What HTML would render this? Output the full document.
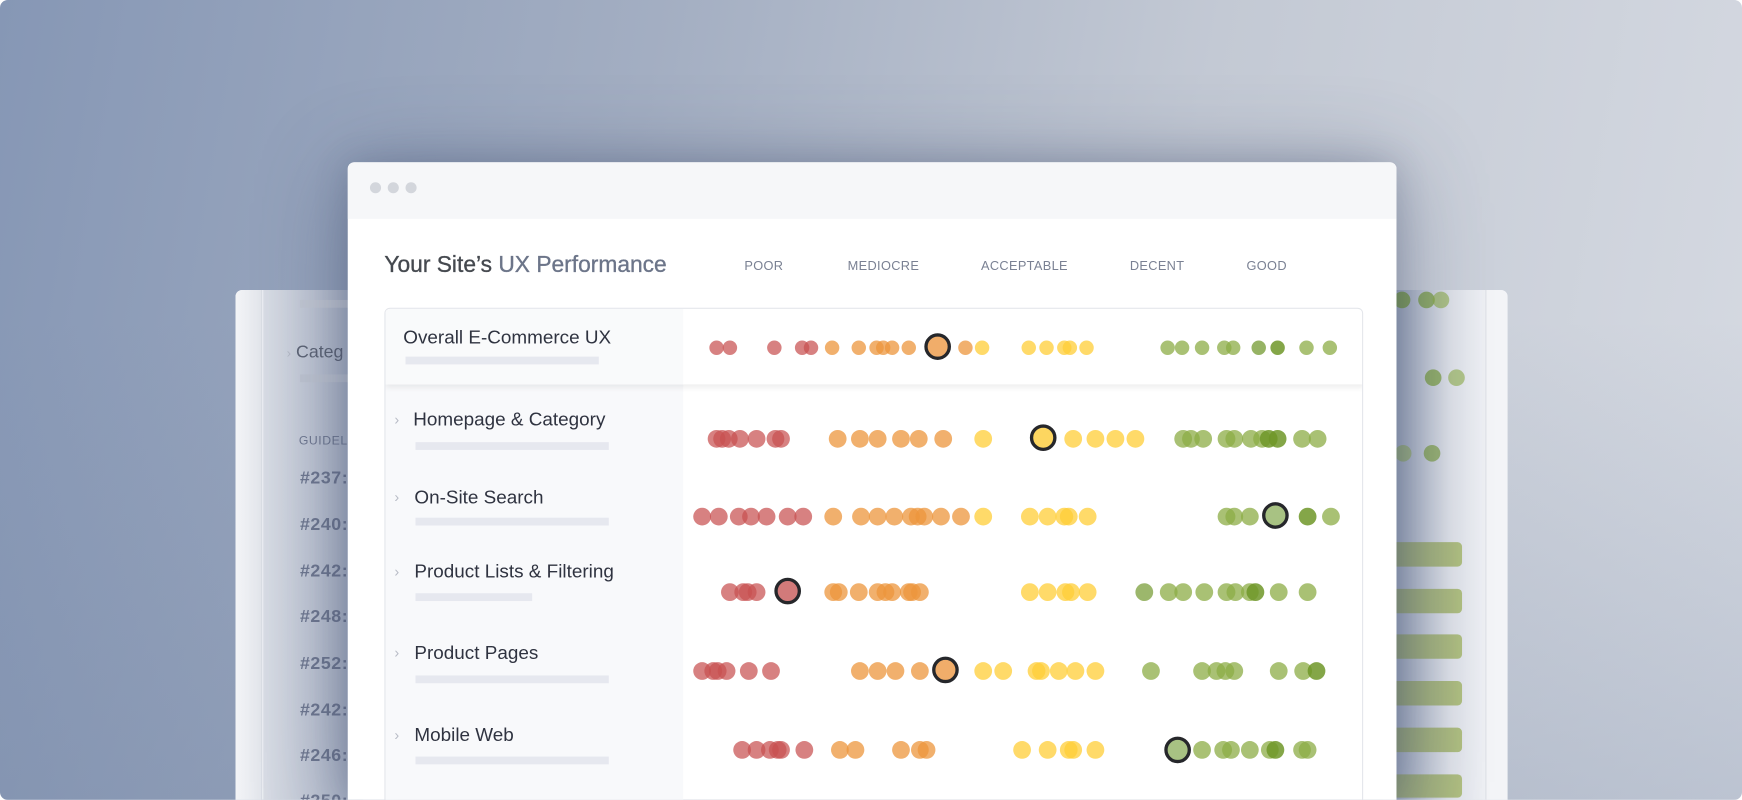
<!DOCTYPE html>
<html><head><meta charset="utf-8"><style>
*{margin:0;padding:0;box-sizing:border-box}
html,body{width:1742px;height:800px;overflow:hidden;background:#fff}
#s{position:absolute;left:0;top:0;width:1568px;height:720px;transform:scale(1.11097);transform-origin:0 0;overflow:hidden;border-radius:7px;
background:linear-gradient(180deg,rgba(120,138,170,0) 40%,rgba(110,128,160,0.25) 100%),linear-gradient(100deg,#8697b5 0%,#a3aec2 35%,#c3c9d4 65%,#d6dae2 100%);
font-family:"Liberation Sans",sans-serif}
.a{position:absolute}
#back{left:212px;top:261px;width:1145px;height:459px;border-radius:6px 6px 0 0;background:#eef0f4;overflow:hidden}
#back .strip{left:0;top:0;width:24px;height:100%;background:linear-gradient(90deg,#f3f4f7,#e3e6ec);border-right:1px solid #d8dce4}
#back .lc{left:25px;top:0;width:90px;height:100%;background:linear-gradient(90deg,#d9dde5,#a9b2c5)}
#back .rs{left:1045px;top:0;width:80px;height:100%;background:linear-gradient(90deg,#a3adc1,#dfe2e9 60%,#eef0f4)}
#back .rl{left:1125px;top:0;width:20px;height:100%;background:#f3f4f7;border-left:1px solid #dde0e6}
.gb{position:absolute;left:1250px;width:66px;height:22px;border-radius:4px;background:linear-gradient(90deg,#92a07c,#b0bf80)}
.bt{position:absolute;color:#6f7890;font-size:16px;font-weight:bold;letter-spacing:0.5px}
#win{left:313px;top:146px;width:944px;height:574px;background:#fff;border-radius:6px 6px 0 0;box-shadow:0 10px 80px rgba(50,65,100,0.45),0 0 30px rgba(50,65,100,0.2);overflow:hidden}
#hdr{left:0;top:0;width:944px;height:51px;background:#f6f7f9}
.wd{position:absolute;top:18px;width:10px;height:10px;border-radius:50%;background:#d3d6dc}
#title{left:33px;top:81px;font-size:20.5px;color:#45494f;white-space:nowrap;-webkit-text-stroke:0.3px #45494f}
#title span{color:#6c7589;-webkit-text-stroke:0.3px #6c7589}
.lbl{position:absolute;top:88px;font-size:11.5px;color:#7a8193;letter-spacing:0.3px}
#tbl{left:33px;top:131px;width:881px;height:460px;border:1px solid #e4e6eb;border-radius:5px;overflow:hidden}
#lcol{left:0;top:0;width:268px;height:100%;background:#f8f9fb}
#ov{left:0;top:0;width:881px;height:68px;background:#fff;box-shadow:0 3px 5px rgba(0,0,0,0.07)}
#ov .l{left:0;top:0;width:268px;height:68px;background:#f9fafb}
.rt{position:absolute;font-size:17px;color:#2f3340;white-space:nowrap}
.bar{position:absolute;height:7px;background:#e6e8ef}
.ch{position:absolute;font-size:13px;color:#b8bcc6}
.d{position:absolute;width:16px;height:16px;border-radius:50%;transform:translate(-50%,-50%)}
.sm .d{width:13px;height:13px}
.r{background:rgba(200,80,80,0.72)}
.o{background:rgba(236,150,60,0.75)}
.y{background:rgba(255,205,55,0.75)}
.g{background:rgba(140,172,70,0.75)}
.G{background:rgba(110,150,40,0.85)}
.h{width:24px!important;height:24px!important;border:3px solid #26272b}
.h.r{background:#d27a7a}.h.o{background:#f0ad6a}.h.y{background:#fdd660}.h.g{background:#a8c283}
</style></head><body><div id="s">

<div id="back" class="a">
 <div class="a strip"></div>
 <div class="a lc"></div>
 <div class="a rs"></div>
 <div class="a rl"></div>
 <div class="a" style="left:58px;top:9px;width:60px;height:7px;background:#c4c9d4"></div>
 <div class="a" style="left:46px;top:48px;font-size:16px;color:#5d6474;white-space:nowrap"><span style="color:#b5bac6;font-size:12px">›</span> Categ</div>
 <div class="a" style="left:58px;top:76px;width:60px;height:7px;background:#c0c6d2"></div>
 <div class="a" style="left:57px;top:130px;font-size:11px;color:#6f7890;letter-spacing:0.5px">GUIDELI</div>
 <div class="bt" style="left:58px;top:161px">#237:</div>
 <div class="bt" style="left:58px;top:203px">#240:</div>
 <div class="bt" style="left:58px;top:245px">#242:</div>
 <div class="bt" style="left:58px;top:286px">#248:</div>
 <div class="bt" style="left:58px;top:328px">#252:</div>
 <div class="bt" style="left:58px;top:370px">#242:</div>
 <div class="bt" style="left:58px;top:411px">#246:</div>
 <div class="bt" style="left:58px;top:452px">#250:</div>
</div>
<div class="d G" style="left:1262px;top:270px;width:15px;height:15px;opacity:.8"></div>
<div class="d G" style="left:1284px;top:270px;width:15px;height:15px;opacity:.75"></div>
<div class="d g" style="left:1297px;top:270px;width:15px;height:15px;opacity:.8"></div>
<div class="d G" style="left:1290px;top:340px;width:15px;height:15px;opacity:.75"></div>
<div class="d g" style="left:1311px;top:340px;width:15px;height:15px;opacity:.8"></div>
<div class="d g" style="left:1263px;top:408px;width:15px;height:15px;opacity:.7"></div>
<div class="d G" style="left:1289px;top:408px;width:15px;height:15px;opacity:.7"></div>
<div class="gb" style="top:488px"></div>
<div class="gb" style="top:530px"></div>
<div class="gb" style="top:571px"></div>
<div class="gb" style="top:613px"></div>
<div class="gb" style="top:655px"></div>
<div class="gb" style="top:697px;height:21px"></div>

<div id="win" class="a">
 <div id="hdr" class="a"></div>
 <div class="wd" style="left:20px"></div><div class="wd" style="left:36px"></div><div class="wd" style="left:52px"></div>
 <div id="title" class="a">Your Site’s <span>UX Performance</span></div>
 <div class="lbl" style="left:357px">POOR</div>
 <div class="lbl" style="left:450px">MEDIOCRE</div>
 <div class="lbl" style="left:570px">ACCEPTABLE</div>
 <div class="lbl" style="left:704px">DECENT</div>
 <div class="lbl" style="left:809px">GOOD</div>
 <div id="tbl" class="a">
  <div id="lcol" class="a"></div>
  <div id="ov" class="a"><div class="a l"></div></div>
  <div class="rt" style="left:16px;top:16px">Overall E-Commerce UX</div>
  <div class="bar" style="left:18px;top:43px;width:174px"></div>
  <div class="ch" style="left:8px;top:92px">›</div>
  <div class="rt" style="left:25px;top:90px">Homepage &amp; Category</div>
  <div class="bar" style="left:27px;top:120px;width:174px"></div>
  <div class="ch" style="left:8px;top:162px">›</div>
  <div class="rt" style="left:26px;top:160px">On-Site Search</div>
  <div class="bar" style="left:27px;top:188px;width:174px"></div>
  <div class="ch" style="left:8px;top:229px">›</div>
  <div class="rt" style="left:26px;top:227px">Product Lists &amp; Filtering</div>
  <div class="bar" style="left:27px;top:256px;width:105px"></div>
  <div class="ch" style="left:8px;top:302px">›</div>
  <div class="rt" style="left:26px;top:300px">Product Pages</div>
  <div class="bar" style="left:27px;top:330px;width:174px"></div>
  <div class="ch" style="left:8px;top:376px">›</div>
  <div class="rt" style="left:26px;top:374px">Mobile Web</div>
  <div class="bar" style="left:27px;top:403px;width:174px"></div>
 </div>
</div>

<div class="sm">
<div class="d r" style="left:645px;top:313px"></div><div class="d r" style="left:657px;top:313px"></div><div class="d r" style="left:697px;top:313px"></div><div class="d r" style="left:722px;top:313px"></div><div class="d r" style="left:730px;top:313px"></div>
<div class="d o" style="left:749px;top:313px"></div><div class="d o" style="left:773px;top:313px"></div><div class="d o" style="left:789px;top:313px"></div><div class="d o" style="left:795px;top:313px"></div><div class="d o" style="left:803px;top:313px"></div><div class="d o" style="left:818px;top:313px"></div>
<div class="d o h" style="left:844px;top:312px"></div><div class="d o" style="left:869px;top:313px"></div>
<div class="d y" style="left:884px;top:313px"></div><div class="d y" style="left:926px;top:313px"></div><div class="d y" style="left:942px;top:313px"></div><div class="d y" style="left:958px;top:313px"></div><div class="d y" style="left:963px;top:313px"></div><div class="d y" style="left:978px;top:313px"></div>
<div class="d g" style="left:1051px;top:313px"></div><div class="d g" style="left:1064px;top:313px"></div><div class="d g" style="left:1082px;top:313px"></div><div class="d g" style="left:1102px;top:313px"></div><div class="d g" style="left:1110px;top:313px"></div><div class="d G" style="left:1133px;top:313px;opacity:.85"></div><div class="d G" style="left:1150px;top:313px"></div><div class="d g" style="left:1176px;top:313px"></div><div class="d g" style="left:1197px;top:313px"></div>
</div>

<div class="d r" style="left:645px;top:395px"></div><div class="d r" style="left:650px;top:395px"></div><div class="d r" style="left:656px;top:395px"></div><div class="d r" style="left:666px;top:395px"></div><div class="d r" style="left:681px;top:395px"></div><div class="d r" style="left:698px;top:395px"></div><div class="d r" style="left:703px;top:395px"></div>
<div class="d o" style="left:754px;top:395px"></div><div class="d o" style="left:774px;top:395px"></div><div class="d o" style="left:790px;top:395px"></div><div class="d o" style="left:811px;top:395px"></div><div class="d o" style="left:827px;top:395px"></div><div class="d o" style="left:849px;top:395px"></div>
<div class="d y" style="left:885px;top:395px"></div><div class="d y h" style="left:939px;top:394px"></div><div class="d y" style="left:966px;top:395px"></div><div class="d y" style="left:986px;top:395px"></div><div class="d y" style="left:1004px;top:395px"></div><div class="d y" style="left:1022px;top:395px"></div>
<div class="d g" style="left:1065px;top:395px"></div><div class="d g" style="left:1072px;top:395px"></div><div class="d g" style="left:1083px;top:395px"></div><div class="d g" style="left:1104px;top:395px"></div><div class="d g" style="left:1111px;top:395px"></div><div class="d g" style="left:1126px;top:395px"></div><div class="d g" style="left:1136px;top:395px"></div><div class="d G" style="left:1142px;top:395px"></div><div class="d G" style="left:1150px;top:395px"></div><div class="d g" style="left:1172px;top:395px"></div><div class="d g" style="left:1186px;top:395px"></div>

<div class="d r" style="left:632px;top:465px"></div><div class="d r" style="left:647px;top:465px"></div><div class="d r" style="left:665px;top:465px"></div><div class="d r" style="left:676px;top:465px"></div><div class="d r" style="left:690px;top:465px"></div><div class="d r" style="left:709px;top:465px"></div><div class="d r" style="left:723px;top:465px"></div>
<div class="d o" style="left:750px;top:465px"></div><div class="d o" style="left:775px;top:465px"></div><div class="d o" style="left:790px;top:465px"></div><div class="d o" style="left:805px;top:465px"></div><div class="d o" style="left:820px;top:465px"></div><div class="d o" style="left:826px;top:465px"></div><div class="d o" style="left:832px;top:465px"></div><div class="d o" style="left:847px;top:465px"></div><div class="d o" style="left:865px;top:465px"></div>
<div class="d y" style="left:885px;top:465px"></div><div class="d y" style="left:927px;top:465px"></div><div class="d y" style="left:943px;top:465px"></div><div class="d y" style="left:958px;top:465px"></div><div class="d y" style="left:962px;top:465px"></div><div class="d y" style="left:979px;top:465px"></div>
<div class="d g" style="left:1104px;top:465px"></div><div class="d g" style="left:1111px;top:465px"></div><div class="d g" style="left:1125px;top:465px"></div><div class="d g h" style="left:1148px;top:464px"></div><div class="d G" style="left:1177px;top:465px"></div><div class="d g" style="left:1198px;top:465px"></div>

<div class="d r" style="left:657px;top:533px"></div><div class="d r" style="left:669px;top:533px"></div><div class="d r" style="left:673px;top:533px"></div><div class="d r" style="left:681px;top:533px"></div><div class="d r h" style="left:709px;top:532px"></div>
<div class="d o" style="left:750px;top:533px"></div><div class="d o" style="left:755px;top:533px"></div><div class="d o" style="left:773px;top:533px"></div><div class="d o" style="left:790px;top:533px"></div><div class="d o" style="left:797px;top:533px"></div><div class="d o" style="left:803px;top:533px"></div><div class="d o" style="left:818px;top:533px"></div><div class="d o" style="left:821px;top:533px"></div><div class="d o" style="left:828px;top:533px"></div>
<div class="d y" style="left:927px;top:533px"></div><div class="d y" style="left:943px;top:533px"></div><div class="d y" style="left:959px;top:533px"></div><div class="d y" style="left:964px;top:533px"></div><div class="d y" style="left:979px;top:533px"></div>
<div class="d G" style="left:1030px;top:533px;opacity:.8"></div><div class="d g" style="left:1052px;top:533px"></div><div class="d g" style="left:1065px;top:533px"></div><div class="d g" style="left:1084px;top:533px"></div><div class="d g" style="left:1104px;top:533px"></div><div class="d g" style="left:1112px;top:533px"></div><div class="d g" style="left:1125px;top:533px"></div><div class="d G" style="left:1130px;top:533px"></div><div class="d g" style="left:1151px;top:533px"></div><div class="d g" style="left:1177px;top:533px"></div>

<div class="d r" style="left:632px;top:604px"></div><div class="d r" style="left:642px;top:604px"></div><div class="d r" style="left:646px;top:604px"></div><div class="d r" style="left:654px;top:604px"></div><div class="d r" style="left:674px;top:604px"></div><div class="d r" style="left:694px;top:604px"></div>
<div class="d o" style="left:774px;top:604px"></div><div class="d o" style="left:790px;top:604px"></div><div class="d o" style="left:806px;top:604px"></div><div class="d o" style="left:828px;top:604px"></div><div class="d o h" style="left:851px;top:603px"></div>
<div class="d y" style="left:885px;top:604px"></div><div class="d y" style="left:903px;top:604px"></div><div class="d y" style="left:933px;top:604px"></div><div class="d y" style="left:937px;top:604px"></div><div class="d y" style="left:953px;top:604px"></div><div class="d y" style="left:968px;top:604px"></div><div class="d y" style="left:986px;top:604px"></div>
<div class="d g" style="left:1036px;top:604px"></div><div class="d g" style="left:1082px;top:604px"></div><div class="d g" style="left:1095px;top:604px"></div><div class="d g" style="left:1103px;top:604px"></div><div class="d g" style="left:1111px;top:604px"></div><div class="d g" style="left:1151px;top:604px"></div><div class="d g" style="left:1173px;top:604px"></div><div class="d G" style="left:1185px;top:604px"></div>

<div class="d r" style="left:668px;top:675px"></div><div class="d r" style="left:681px;top:675px"></div><div class="d r" style="left:693px;top:675px"></div><div class="d r" style="left:700px;top:675px"></div><div class="d r" style="left:703px;top:675px"></div><div class="d r" style="left:724px;top:675px"></div>
<div class="d o" style="left:756px;top:675px"></div><div class="d o" style="left:770px;top:675px"></div><div class="d o" style="left:811px;top:675px"></div><div class="d o" style="left:828px;top:675px"></div><div class="d o" style="left:834px;top:675px"></div>
<div class="d y" style="left:920px;top:675px"></div><div class="d y" style="left:943px;top:675px"></div><div class="d y" style="left:962px;top:675px"></div><div class="d y" style="left:966px;top:675px"></div><div class="d y" style="left:986px;top:675px"></div>
<div class="d g h" style="left:1060px;top:675px"></div><div class="d g" style="left:1082px;top:675px"></div><div class="d g" style="left:1101px;top:675px"></div><div class="d g" style="left:1108px;top:675px"></div><div class="d g" style="left:1125px;top:675px"></div><div class="d g" style="left:1143px;top:675px"></div><div class="d G" style="left:1148px;top:675px"></div><div class="d g" style="left:1172px;top:675px"></div><div class="d g" style="left:1177px;top:675px"></div>

</div></body></html>
